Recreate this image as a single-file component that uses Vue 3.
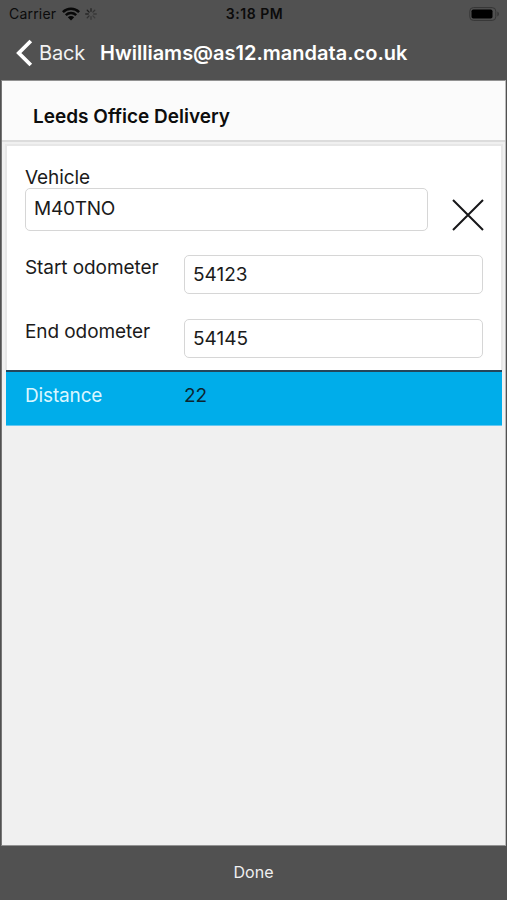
<script setup>
import { ref, computed } from 'vue'

const vehicle = ref('M40TNO')
const start = ref(54123)
const end = ref(54145)
const distance = computed(() => end.value - start.value)
const spokes = [0.75, 0.5, 0.4, 0.35, 0.4, 0.55, 0.7, 0.85]
</script>

<template>
  <div class="screen">
    <div class="status">
      <div class="status-left">
        <span class="carrier">Carrier</span>
        <svg class="wifi" width="18" height="14" viewBox="0 0 18 14" fill="none" stroke="#080808" stroke-width="2.5">
          <path d="M.9 5.1C5.4 .6 12.6 .6 17.1 5.1" />
          <path d="M3.8 8.2C6.8 5.4 11.2 5.4 14.2 8.2" />
          <path d="M9 13.4L5.8 10.2C7.6 8.6 10.4 8.6 12.2 10.2Z" fill="#080808" stroke="none" />
        </svg>
        <svg class="spinner" width="12" height="12" viewBox="-6 -6 12 12" stroke="#161616" stroke-width="1.3" stroke-linecap="round">
          <line v-for="(o, i) in spokes" :key="i" x1="0" y1="-2.7" x2="0" y2="-5.3" :opacity="o" :transform="`rotate(${i * 45})`" />
        </svg>
      </div>
      <span class="clock">3:18 PM</span>
      <div class="status-right">
        <svg width="31" height="14" viewBox="0 0 31 14">
          <rect x=".8" y=".6" width="26" height="12.8" rx="3.6" fill="none" stroke="#363636" />
          <rect x="2.5" y="2.5" width="21" height="9" rx="1.8" fill="#000" />
          <path d="M28.3 4.6Q30 5.2 30 7T28.3 9.4Z" fill="#363636" />
        </svg>
      </div>
    </div>

    <header class="nav">
      <svg width="17" height="28" viewBox="0 0 17 28" fill="none" stroke="#fff" stroke-width="3.8">
        <path d="M14.8 2L2.8 14L14.8 26" />
      </svg>
      <span class="back">Back</span>
      <h1 class="account">Hwilliams@as12.mandata.co.uk</h1>
    </header>

    <main class="content">
      <h2 class="title">Leeds Office Delivery</h2>
      <section class="card">
        <label class="label vehicle-label">Vehicle</label>
        <div class="vehicle-row">
          <div class="field vehicle-field">{{ vehicle }}</div>
          <svg class="clear" width="32" height="32" viewBox="0 0 32 32" stroke="#171719" stroke-width="2">
            <path d="M1 1L31 31M31 1L1 31" />
          </svg>
        </div>
        <div class="row">
          <label class="label">Start odometer</label>
          <div class="field">{{ start }}</div>
        </div>
        <div class="row">
          <label class="label">End odometer</label>
          <div class="field">{{ end }}</div>
        </div>
      </section>
      <div class="total">
        <span class="distance">Distance</span>
        <span class="amount">{{ distance }}</span>
      </div>
    </main>

    <footer class="footer"><span>Done</span></footer>
  </div>
</template>

<style>
body {
  margin: 0;
  background: #515151;
}
</style>

<style scoped>
* {
  box-sizing: border-box;
}
.screen {
  width: 507px;
  height: 900px;
  display: flex;
  flex-direction: column;
  background: #515151;
  color: #1b1b1b;
  font-family: Inter, "Liberation Sans", sans-serif;
  font-size: 19px;
  line-height: 24px;
  white-space: nowrap;
  overflow: hidden;
}
h1, h2 {
  margin: 0;
}
.status {
  height: 28px;
  padding: 0 7px 0 9px;
  display: grid;
  grid-template-columns: 1fr auto 1fr;
  align-items: center;
  color: #0b0b0b;
  font-size: 14px;
}
.status-left {
  display: flex;
  align-items: center;
}
.carrier {
  width: 53px;
  letter-spacing: 0.2px;
}
.spinner {
  margin-left: 5px;
}
.clock {
  font-weight: 600;
  letter-spacing: 0.55px;
}
.status-right {
  display: flex;
  justify-content: flex-end;
}
.nav {
  height: 52px;
  padding: 0 0 3px 16px;
  display: flex;
  align-items: center;
  color: #fff;
}
.back {
  width: 61px;
  margin-left: 6px;
  font-size: 20px;
  letter-spacing: -0.15px;
  color: #f2f2f2;
}
.account {
  font-size: 20px;
  font-weight: 600;
}
.content {
  height: 766px;
  margin: 0 1px;
  border: 1px solid #929292;
  border-left-color: #777;
  border-right-color: #bbb;
  background: #f0f0f0;
}
.title {
  height: 61px;
  padding: 24px 0 0 31px;
  border-bottom: 2px solid #dcdcdc;
  background: #fbfbfb;
  color: #0d0d0d;
  font-size: 19px;
  font-weight: 600;
}
.card {
  height: 226px;
  margin: 2px 2px 0 3px;
  padding: 19px 18px 0 18px;
  border: 2px solid #e7e7e7;
  border-bottom: 0;
  background: #fff;
}
.label {
  padding-top: 1px;
  letter-spacing: -0.08px;
}
.vehicle-label {
  display: block;
  height: 23px;
}
.vehicle-row {
  display: flex;
  justify-content: space-between;
  height: 67px;
}
.field {
  height: 39px;
  padding: 7px 8px;
  border: 1px solid #d6d6d6;
  border-radius: 5px;
  background: #fff;
}
.vehicle-field {
  width: 403px;
  height: 43px;
  padding: 8px 8px;
  letter-spacing: -0.25px;
}
.clear {
  margin: 11px -1px 0 0;
}
.row {
  height: 64px;
  display: grid;
  grid-template-columns: 159px 1fr;
}
.total {
  height: 56px;
  margin: 0 3px 0 4px;
  padding: 12px 19px 0;
  display: grid;
  grid-template-columns: 159px 1fr;
  border-top: 2px solid #24465c;
  border-bottom: 1px solid #66c8f1;
  background: #00adea;
}
.distance {
  color: #d9f6ff;
  letter-spacing: -0.15px;
}
.amount {
  color: #0c2530;
}
.footer {
  flex: 1;
  padding-top: 14px;
  text-align: center;
  color: #f0f0f0;
  font-size: 16px;
}
</style>
